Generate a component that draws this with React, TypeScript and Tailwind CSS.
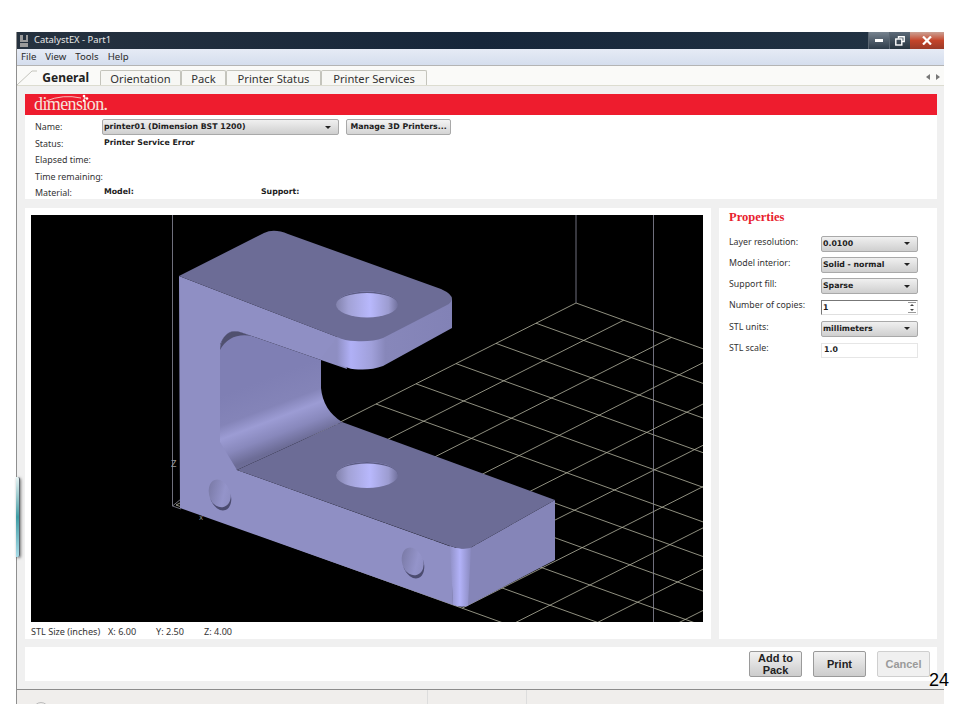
const sans = "font-['Noto_Sans',sans-serif]";
const bold = "font-['DejaVu_Sans',sans-serif] font-bold text-[7.8px] whitespace-nowrap text-[#1c1c1c]";

const P0 = { x: 576, y: 303 };
const A = { x: -40, y: 20.2 };
const B = { x: 47.7, y: 17.2 };

const tabs = [
  { label: "Orientation", width: "w-[81px]" },
  { label: "Pack", width: "w-[45px]" },
  { label: "Printer Status", width: "w-[95px]" },
  { label: "Printer Services", width: "w-[106px]" },
];

const infoRows = [
  { label: "Status:", value: "Printer Service Error" },
  { label: "Elapsed time:", value: "" },
  { label: "Time remaining:", value: "" },
];

const Caret = () => <span className="ml-auto h-0 w-0 border-x-[3px] border-t-[3px] border-x-transparent border-t-[#222]" />;

const Select = ({ value, className }: { value: string; className: string }) => (
  <div className={`flex h-[16px] items-center rounded-[2px] border border-[#a9a9a9] bg-gradient-to-b from-[#f0f0f0] to-[#cfcfcf] pl-[1px] pr-[7px] ${className}`}>
    <span className={bold}>{value}</span>
    <Caret />
  </div>
);

const Model = () => (
  <svg viewBox="31 215 672 407" className="block h-[407px] w-[672px] bg-black">
    <defs>
      <linearGradient id="armSide" gradientUnits="userSpaceOnUse" x1="337" y1="0" x2="452" y2="0">
        <stop offset="0" stopColor="#8e8ec2" />
        <stop offset="0.12" stopColor="#b0b0f6" />
        <stop offset="0.3" stopColor="#a0a0da" />
        <stop offset="0.42" stopColor="#8787ba" />
        <stop offset="1" stopColor="#8282b6" />
      </linearGradient>
      <linearGradient id="corner" gradientUnits="userSpaceOnUse" x1="450" y1="0" x2="472" y2="0">
        <stop offset="0" stopColor="#9090c6" />
        <stop offset="0.45" stopColor="#b2b2f8" />
        <stop offset="1" stopColor="#8686ba" />
      </linearGradient>
      <linearGradient id="wall" gradientUnits="userSpaceOnUse" x1="262" y1="380" x2="287" y2="446">
        <stop offset="0" stopColor="#7f7fb4" />
        <stop offset="0.4" stopColor="#8484b8" />
        <stop offset="0.58" stopColor="#9c9cd4" />
        <stop offset="0.8" stopColor="#8888bc" />
        <stop offset="1" stopColor="#6c6c96" />
      </linearGradient>
      <linearGradient id="hole" x1="0" y1="0" x2="1" y2="0">
        <stop offset="0" stopColor="#8282ac" />
        <stop offset="0.2" stopColor="#a2a2d6" />
        <stop offset="0.55" stopColor="#b8b8fc" />
        <stop offset="0.85" stopColor="#9c9cd0" />
        <stop offset="1" stopColor="#70709c" />
      </linearGradient>
      <linearGradient id="sideHole" x1="0" y1="0" x2="1" y2="1">
        <stop offset="0" stopColor="#74749e" />
        <stop offset="0.6" stopColor="#9494ca" />
        <stop offset="1" stopColor="#8a8abc" />
      </linearGradient>
    </defs>

    {/* floor grid, drawn under the part */}
    <g stroke="#b4b4a0" strokeWidth="0.8">
      {Array.from({ length: 11 }, (_, j) => (
        <line key={`b${j}`} x1={P0.x + j * A.x} y1={P0.y + j * A.y} x2={P0.x + j * A.x + 18 * B.x} y2={P0.y + j * A.y + 18 * B.y} />
      ))}
      {Array.from({ length: 18 }, (_, i) => (
        <line key={`a${i}`} x1={P0.x + i * B.x} y1={P0.y + i * B.y} x2={P0.x + i * B.x + 10 * A.x} y2={P0.y + i * B.y + 10 * A.y} />
      ))}
    </g>
    <g stroke="#8c8c9c" strokeWidth="0.8">
      <line x1="172.5" y1="215" x2="172.5" y2="506" />
      <line x1="576" y1="215" x2="576" y2="303" />
      <line x1="653.5" y1="215" x2="653.5" y2="622" />
      <path d="M172.5,506 L181,499 M172.5,506 L181,509" fill="none" />
    </g>
    <text x="171" y="467" fontSize="8" fill="#9a9a9a" fontFamily="DejaVu Sans, sans-serif">Z</text>
    <text x="199" y="520" fontSize="6" fill="#9a9a9a" fontFamily="DejaVu Sans, sans-serif">X</text>

    {/* opening behind the U */}
    <path d="M220,345 Q226,328 240,332 L321,360 L321,388 Q323,410 342,422 L237,470 L220,455 Z" fill="url(#wall)" />
    <path d="M220,350 Q222,328 240,332 L252,336 Q230,332 220,350 Z" fill="#50506f" />

    {/* front faces */}
    <path d="M179,276 L340,338 L347,369 L321,360 L240,332 Q226,328 220,345 L220,442 L237,470 L452,547 L453,605 L180,508 Z" fill="#8f8fc4" />
    <path d="M337,337 L452,299 L452,328 L383,366 Q372,370 360,369.5 Q352,370 343,366 L321,358 Z" fill="url(#armSide)" />
    <path d="M470,548 L555,500 L555,560 L467,606 Z" fill="#8585b8" />
    <path d="M450,546 Q460,550 471,547 L468,606 Q460,608 453,605 Z" fill="url(#corner)" />

    {/* top faces */}
    <path d="M179,276 L264,233 Q274,228 288,234 L441,289 Q452,294 452,299 Q451,303 447,305 L383,338 Q372,342 355,341 Q345,341 337,337 Z" fill="#6c6c96" />
    <path d="M237,470 L342,422 L555,500 L470,548 Q460,550 450,546 Z" fill="#6c6c96" />

    {/* holes */}
    <ellipse cx="367" cy="304.5" rx="31" ry="13" fill="url(#hole)" />
    <path d="M336,304.5 A31,13 0 0 1 398,304.5 A31,11.5 0 0 0 336,304.5 Z" fill="#5c5c84" />
    <ellipse cx="367" cy="475" rx="31" ry="13" fill="url(#hole)" />
    <path d="M336,475 A31,13 0 0 1 398,475 A31,11.5 0 0 0 336,475 Z" fill="#5c5c84" />
    <g transform="rotate(-20 220 495)">
      <ellipse cx="220" cy="495" rx="10.5" ry="16" fill="url(#sideHole)" />
      <path d="M230.5,495 A10.5,16 0 0 1 209.5,495 A10.5,12.5 0 0 0 230.5,495 Z" fill="#4c4c70" />
    </g>
    <g transform="rotate(-20 413 563)">
      <ellipse cx="413" cy="563" rx="10.5" ry="16" fill="url(#sideHole)" />
      <path d="M423.5,563 A10.5,16 0 0 1 402.5,563 A10.5,12.5 0 0 0 423.5,563 Z" fill="#4c4c70" />
    </g>
  </svg>
);

const Field = ({ label, children }: { label: string; children: React.ReactNode }) => (
  <div className="flex h-[21.3px] items-center justify-between">
    <span className="-mt-[3px] text-[8.8px] text-[#333]">{label}</span>
    {children}
  </div>
);

export default function App() {
  return (
    <div className={`relative h-[720px] w-[960px] overflow-hidden bg-white pl-4 pt-8 ${sans}`}>
      <div className="flex h-[672px] w-[928px] flex-col border-l border-[#8f8f8f] bg-[#f0f0f0]">
        {/* title bar */}
        <div className="flex h-[17px] shrink-0 items-center bg-gradient-to-r from-[#26323f] via-[#16263a] to-[#233444] pl-[2px]">
          <svg width="10" height="14" viewBox="0 0 10 14">
            <path d="M1,1 h3 v5 h3 v-5 h2 v7 h-8 z M1,9 h8 v4 h-8 z" fill="#9a9a9a" />
          </svg>
          <span className="ml-[5px] text-[9.4px] text-[#e8e8e8]">CatalystEX - Part1</span>
          <div className="ml-auto flex h-full">
            <div className="flex w-[21px] items-center justify-center border-l border-[#5a6672] bg-gradient-to-b from-[#77838f] to-[#2e3c4a]">
              <span className="h-[3px] w-[8px] bg-white" />
            </div>
            <div className="flex w-[21px] items-center justify-center border-l border-[#5a6672] bg-gradient-to-b from-[#5c6a78] to-[#26343f]">
              <svg width="10" height="10" viewBox="0 0 10 10" fill="none" stroke="#fff" strokeWidth="1.4">
                <path d="M3.5,2.5 V0.8 H9.2 V5.5 H7" />
                <rect x="0.8" y="3" width="6" height="6" />
              </svg>
            </div>
            <div className="flex w-[34px] items-center justify-center bg-gradient-to-b from-[#c9a094] via-[#c4442a] to-[#9a3a28]">
              <svg width="10" height="9" viewBox="0 0 10 9" stroke="#fff" strokeWidth="2.2">
                <path d="M1,0.5 L9,8.5 M9,0.5 L1,8.5" />
              </svg>
            </div>
          </div>
        </div>

        {/* menu */}
        <div className="flex h-[17px] shrink-0 items-center gap-[9px] border-b border-[#b4b4b4] bg-gradient-to-b from-[#e6ebf5] to-[#d5deee] pl-[4px] text-[9.6px] text-[#2a2a2a]">
          <span>File</span>
          <span>View</span>
          <span>Tools</span>
          <span>Help</span>
        </div>

        {/* tabs */}
        <div className="relative flex h-[20px] shrink-0 items-end border-b border-[#dcdcd0] bg-[#fafaf8]">
          <div className="flex h-[15px] w-[83px] items-center justify-end pt-[1px] pr-[11px] text-[12px] leading-none font-bold text-[#222]">General</div>
          {tabs.map((tab) => (
            <div key={tab.label} className={`flex h-[15px] items-center justify-center rounded-t-[2px] border-x border-t border-[#c4c4bc] bg-[#f7f7f4] pt-[1px] text-[11.2px] leading-none text-[#333] ${tab.width}`}>
              {tab.label}
            </div>
          ))}
          <svg className="absolute top-0 left-0" width="20" height="20" viewBox="0 0 20 20" fill="none" stroke="#c4c4bc">
            <path d="M0,19 L15,5 H20" />
          </svg>
          <div className="absolute top-[8px] right-[4px] flex gap-[6px]">
            <span className="h-0 w-0 border-y-[3.5px] border-r-[4px] border-y-transparent border-r-[#777]" />
            <span className="h-0 w-0 border-y-[3.5px] border-l-[4px] border-y-transparent border-l-[#777]" />
          </div>
        </div>

        {/* printer panel */}
        <div className="flex flex-1 flex-col pt-[8px] pl-[8px] pr-[7px]">
          <div className="relative h-[21px] w-[912px] shrink-0 bg-[#ee1c2e] pl-[9px]">
            <span className="block font-['Liberation_Serif',serif] text-[18px] leading-[21px] tracking-[-0.6px] text-[#f6e4dc]">dimension.</span>
            <svg className="absolute top-0 left-[20px]" width="50" height="12" viewBox="0 0 50 12" fill="none">
              <path d="M1,7 Q18,0 36,4" stroke="#f6e4dc" strokeWidth="0.8" />
              <circle cx="39" cy="2" r="1.3" fill="#fff" />
              <circle cx="42" cy="4.5" r="1.3" fill="#fff" />
              <circle cx="39" cy="6.5" r="1.3" fill="#fff" />
            </svg>
          </div>

          <div className="flex h-[84px] w-[912px] shrink-0 flex-col bg-white pl-[10px] pt-[4px] text-[8.9px] text-[#333]">
            <div className="flex h-[17px] items-center">
              <span className="-mt-[1px] w-[67px]">Name:</span>
              <Select value="printer01  (Dimension BST 1200)" className="w-[237px]" />
              <div className={`ml-[7px] flex h-[16px] w-[105px] items-center justify-center rounded-[2px] border border-[#a9a9a9] bg-gradient-to-b from-[#f4f4f4] to-[#d4d4d4] ${bold}`}>
                Manage 3D Printers...
              </div>
            </div>
            <div className="flex flex-col">
              {infoRows.map((row) => (
                <div key={row.label} className="flex h-[16.5px] items-center">
                  <span className="w-[69px] shrink-0 whitespace-nowrap">{row.label}</span>
                  <span className={bold}>{row.value}</span>
                </div>
              ))}
            </div>
            <div className="mt-[1px] flex h-[16px] items-center">
              <span className="w-[69px]">Material:</span>
              <span className={`w-[157px] ${bold}`}>Model:</span>
              <span className={bold}>Support:</span>
            </div>
          </div>

          {/* viewport and properties */}
          <div className="mt-[9px] flex h-[431px] w-[912px] shrink-0 gap-[8px]">
            <div className="flex h-full w-[686px] flex-col bg-white pl-[6px] pt-[7px]">
              <Model />
              <div className="mt-[3px] flex items-center text-[9.1px] text-[#333]">
                <span className="w-[77px]">STL Size (inches)</span>
                <span className="w-[48px]">X: 6.00</span>
                <span className="w-[48px]">Y: 2.50</span>
                <span>Z: 4.00</span>
              </div>
            </div>
            <div className="h-full w-[218px] bg-white pl-[10px] pr-[19px]">
              <div className="font-['Liberation_Serif',serif] text-[12.5px] leading-[18px] font-bold text-[#e8222e]">Properties</div>
              <div className="mt-[7px] flex flex-col">
                <Field label="Layer resolution:">
                  <Select value="0.0100" className="w-[97px]" />
                </Field>
                <Field label="Model interior:">
                  <Select value="Solid - normal" className="w-[97px]" />
                </Field>
                <Field label="Support fill:">
                  <Select value="Sparse" className="w-[97px]" />
                </Field>
                <Field label="Number of copies:">
                  <div className="relative flex h-[15px] w-[97px] items-center border border-[#e0e0e0] border-t-[#777] border-l-[#777] pl-[1px]">
                    <span className={bold}>1</span>
                    <div className="absolute top-[1px] right-[1px] flex h-[11px] w-[8px] flex-col items-center justify-between border-y border-[#999] py-[1px]">
                      <span className="h-0 w-0 border-x-[2px] border-b-[2px] border-x-transparent border-b-[#444]" />
                      <span className="h-0 w-0 border-x-[2px] border-t-[2px] border-x-transparent border-t-[#444]" />
                    </div>
                  </div>
                </Field>
                <Field label="STL units:">
                  <Select value="millimeters" className="w-[97px]" />
                </Field>
                <Field label="STL scale:">
                  <div className="flex h-[15px] w-[97px] items-center border border-[#e6e6e6] pl-[2px]">
                    <span className={bold}>1.0</span>
                  </div>
                </Field>
              </div>
            </div>
          </div>

          {/* action bar */}
          <div className="mt-[8px] flex h-[34px] w-[912px] shrink-0 justify-end gap-[11px] bg-white pr-[7px] pt-[4px] font-['Liberation_Sans',sans-serif] text-[11px] leading-[12px] font-bold">
            <div className="flex h-[26px] w-[53px] items-center justify-center rounded-[2px] border border-[#9a9a9a] bg-gradient-to-b from-[#f2f2f2] to-[#cccccc] text-center text-[#222]">Add to Pack</div>
            <div className="flex h-[26px] w-[53px] items-center justify-center rounded-[2px] border border-[#9a9a9a] bg-gradient-to-b from-[#f2f2f2] to-[#cccccc] text-[#222]">Print</div>
            <div className="flex h-[26px] w-[53px] items-center justify-center rounded-[2px] border border-[#cfcfcf] bg-[#f0f0f0] text-[#9a9a9a]">Cancel</div>
          </div>
        </div>

        {/* task strip */}
        <div className="relative flex h-[15px] shrink-0 overflow-hidden border-t border-[#8c8c8c] bg-[#f0eeec]">
          <div className="h-full w-[411px] border-r border-[#dddddd]" />
          <div className="h-full w-[99px] border-r border-[#dddddd]" />
          <span className="absolute top-[12px] left-[16px] h-[16px] w-[16px] rounded-full border border-[#bbbbbb]" />
        </div>
      </div>

      {/* neighbouring window showing at the left edge */}
      <div className="absolute top-[477px] left-[16px] h-[80px] w-[4px] rounded-r-[2px] border-r border-[#56606a] bg-gradient-to-b from-[#e8f4f4] via-[#3f9ea6] to-[#a8dce8] shadow-[1px_1px_3px_rgba(0,0,0,0.5)]" />

      <span className="absolute top-[670px] left-[929px] font-['Liberation_Sans',sans-serif] text-[18px] leading-[21px] text-black">24</span>
    </div>
  );
}
